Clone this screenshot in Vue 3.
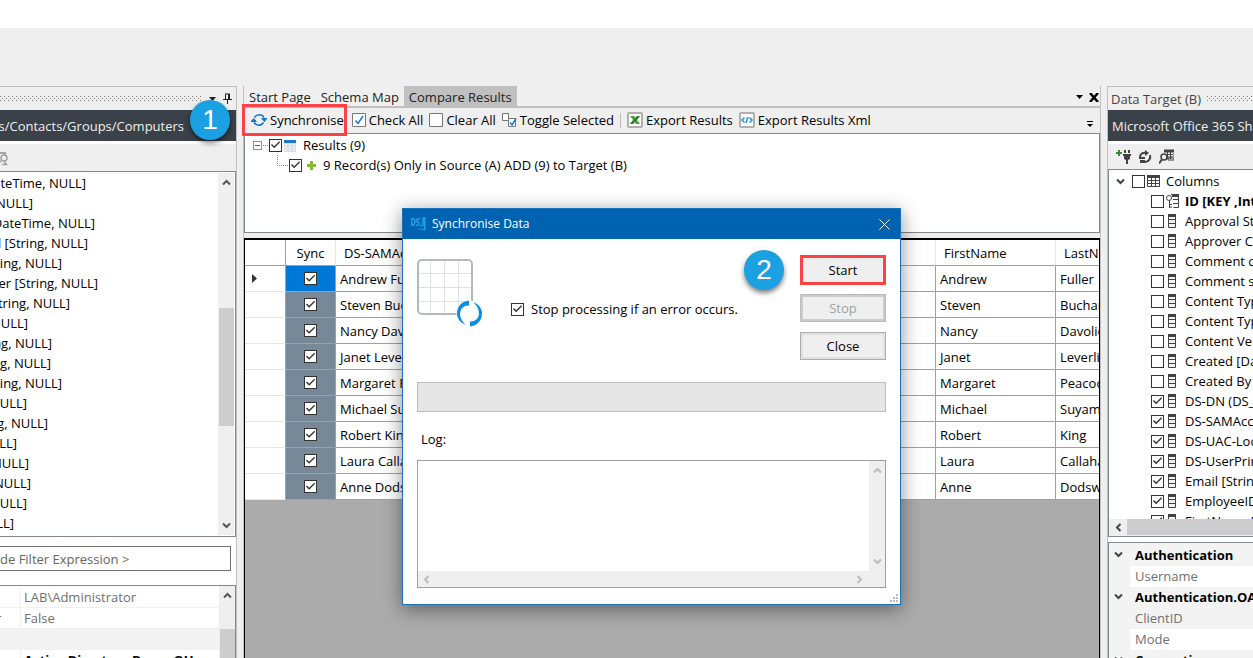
<script setup>
import { ref } from 'vue'

const sourceColumns = [
  { text: 'DateTime, NULL]', end: 86 },
  { text: 'NULL]', end: 33 },
  { text: '[DateTime, NULL]', end: 95 },
  { text: 'rd [String, NULL]', end: 88 },
  { text: 'String, NULL]', end: 62 },
  { text: 'ber [String, NULL]', end: 98 },
  { text: 'String, NULL]', end: 70 },
  { text: 'NULL]', end: 28 },
  { text: 'ring, NULL]', end: 52 },
  { text: 'ring, NULL]', end: 51 },
  { text: 'String, NULL]', end: 62 },
  { text: 'NULL]', end: 27 },
  { text: 'ing, NULL]', end: 48 },
  { text: 'NULL]', end: 17 },
  { text: 'NULL]', end: 29 },
  { text: 'NULL]', end: 31 },
  { text: 'NULL]', end: 27 },
  { text: 'NULL]', end: 14 }
]

const people = ref([
  ['Andrew', 'Fuller'],
  ['Steven', 'Buchanan'],
  ['Nancy', 'Davolio'],
  ['Janet', 'Leverling'],
  ['Margaret', 'Peacock'],
  ['Michael', 'Suyama'],
  ['Robert', 'King'],
  ['Laura', 'Callahan'],
  ['Anne', 'Dodsworth']
].map(([first, last]) => ({ first, last, sync: true })))

const targetColumns = ref([
  ['ID [KEY ,Integer]', false],
  ['Approval Status', false],
  ['Approver Comments', false],
  ['Comment count', false],
  ['Comment settings', false],
  ['Content Type', false],
  ['Content Type ID', false],
  ['Content Version', false],
  ['Created [DateTime]', false],
  ['Created By', false],
  ['DS-DN (DS_DN)', true],
  ['DS-SAMAccountName', true],
  ['DS-UAC-LockOut', true],
  ['DS-UserPrincipal', true],
  ['Email [String]', true],
  ['EmployeeID', true],
  ['FirstName [String]', true]
].map(([name, checked], i) => ({ name, checked, key: i === 0 })))

const targetProps = [
  { name: 'Authentication', group: true },
  { name: 'Username' },
  { name: 'Authentication.OAuth', group: true },
  { name: 'ClientID', shaded: true },
  { name: 'Mode' },
  { name: 'Connection', group: true }
]

const allColumns = ref(false)
const results = ref(true)
const additions = ref(true)
const stopOnError = ref(true)
const filter = ref('de Filter Expression >')
const log = ref('')
</script>

<template>
  <div class="app">
    <svg class="defs" aria-hidden="true">
      <defs>
        <pattern id="grip" width="4" height="4" patternUnits="userSpaceOnUse">
          <rect x="0" y="0" width="1" height="1" fill="#777" />
          <rect x="2" y="2" width="1" height="1" fill="#777" />
        </pattern>
        <symbol id="up" viewBox="0 0 9 7"><path d="M1 5.5 4.500 2 8 5.500" fill="none" stroke="currentColor" stroke-width="2" /></symbol>
        <symbol id="down" viewBox="0 0 9 7"><path d="M1 1.500 4.500 5 8 1.500" fill="none" stroke="currentColor" stroke-width="2" /></symbol>
        <symbol id="left" viewBox="0 0 7 9"><path d="M5.500 1 2 4.500 5.500 8" fill="none" stroke="currentColor" stroke-width="2" /></symbol>
        <symbol id="right" viewBox="0 0 7 9"><path d="M1.500 1 5 4.500 1.500 8" fill="none" stroke="currentColor" stroke-width="2" /></symbol>
      </defs>
    </svg>
    <div class="title-strip"></div>
    <div class="ribbon"></div>

    <div class="workspace">
      <section class="side source">
        <header class="caption">
          <svg class="grip"><rect width="100%" height="6" fill="url(#grip)" /></svg>
          <svg width="7" height="4" viewBox="0 0 7 4"><path d="M0 0h7L3.500 4z" fill="#222" /></svg>
          <svg width="9" height="11" viewBox="0 0 9 11"><path d="M2 1h5M2.500 1v5M6 1v5M0 6.500h9M4.500 7v4" fill="none" stroke="#222" /><path d="M5 1h2v5H5z" fill="#222" /></svg>
        </header>
        <div class="path"><span>Users/Contacts/Groups/Computers</span></div>
        <div class="tools">
          <svg class="grey-tool" width="16" height="16" viewBox="0 0 16 16" fill="none" stroke="#a3a3a3"><path d="M2 3h11v3" stroke-width="2" /><circle cx="12" cy="8" r="3" stroke-width="1.500" /><path d="m10 10-4 4M10 14.500h5M12 11l3 4" stroke-width="1.500" /></svg>
        </div>
        <div class="tree">
          <ul class="source-list">
            <li v-for="(c, i) in sourceColumns" :key="i" :style="{ width: c.end + 'px' }">{{ c.text }}</li>
          </ul>
          <div class="vbar">
            <svg width="9" height="7"><use href="#up" /></svg>
            <div class="track"><div class="thumb"></div></div>
            <svg width="9" height="7"><use href="#down" /></svg>
          </div>
        </div>
        <div class="filter"><input v-model="filter" type="text" aria-label="Filter expression"></div>
        <div class="props">
          <div class="prop-rows">
            <div class="prop"><span class="name"></span><span class="value">LAB\Administrator</span></div>
            <div class="prop"><span class="name">r</span><span class="value">False</span></div>
            <div class="prop group"></div>
            <div class="prop"><span class="name"></span><span class="value strong">Active Directory Demo OU</span></div>
          </div>
          <div class="vbar">
            <svg width="9" height="7"><use href="#up" /></svg>
            <div class="track low"><div class="thumb"></div></div>
          </div>
        </div>
      </section>

      <main class="centre">
        <nav class="tabs">
          <button type="button">Start Page</button>
          <button type="button">Schema Map</button>
          <button type="button" class="active">Compare Results</button>
          <span class="spacer"></span>
          <svg class="menu" width="7" height="4" viewBox="0 0 7 4"><path d="M0 0h7L3.500 4z" fill="#000" /></svg>
          <svg width="10" height="9" viewBox="0 0 10 9"><path d="m1 0 8 9M9 0 1 9" stroke="#000" stroke-width="2.500" /></svg>
        </nav>
        <div class="toolbar">
          <button type="button" class="sync">
            <svg width="16" height="16" viewBox="0 0 16 16"><path d="M3.500 5.500a5.500 5.500 0 0 1 9.500 0M12.500 10.500a5.500 5.500 0 0 1-9.500 0" fill="none" stroke="#1676cf" stroke-width="1.500" /><path d="M10.500 6H16v1l-2.500 3-3-3zM0 10V9l2.700-3L5.500 9v1z" fill="#1676cf" /></svg>Synchronise
          </button>
          <button type="button">
            <svg width="14" height="14" viewBox="0 0 14 14"><path d="M.5.500h13v13H.5z" fill="#fff" stroke="#777" /><path d="m3.500 7.500 2.500 3 5-7.500" fill="none" stroke="#1878d0" stroke-width="1.500" /></svg>Check All
          </button>
          <button type="button">
            <svg width="14" height="14" viewBox="0 0 14 14"><path d="M.5.500h13v13H.5z" fill="#fff" stroke="#777" /></svg>Clear All
          </button>
          <button type="button">
            <svg width="15" height="14" viewBox="0 0 15 14"><path d="M.5.500h6v7h-6z" fill="#fff" stroke="#777" /><path d="M6.500 5.500h7v8h-7z" fill="#fff" stroke="#777" /><path d="m8 9.500 2 2.500 4-6.500" fill="none" stroke="#1878d0" stroke-width="1.500" /></svg>Toggle Selected
          </button>
          <span class="divider"></span>
          <button type="button">
            <svg width="16" height="16" viewBox="0 0 16 16"><rect x="1" y="1" width="14" height="14" rx="1" fill="#fff" stroke="#b0b0b0" stroke-width="2" /><path d="M3 4h4l1.500 2L10 4h3l-3 4 3 4H9l-1.500-2L6 12H3l3-4z" fill="#4f9f41" /><path d="M10 4h3l-7 8H3z" fill="#2f7d32" /></svg>Export Results
          </button>
          <button type="button">
            <svg width="16" height="16" viewBox="0 0 16 16"><rect x="1" y="1" width="14" height="14" rx="1" fill="#fff" stroke="#b0b0b0" stroke-width="2" /><path d="M5.500 5.500 3 8l2.500 2.500M10.500 5.500 13 8l-2.500 2.500M9 5l-2 6" fill="none" stroke="#1a93e8" stroke-width="1.500" /></svg>Export Results Xml
          </button>
          <span class="spacer"></span>
          <svg class="overflow" width="6" height="7" viewBox="0 0 6 7"><path d="M0 0h6v1H0zM0 3h6L3 6z" fill="#000" /></svg>
        </div>

        <div class="results">
          <div class="node">
            <svg width="16" height="20" viewBox="0 0 16 20"><rect x=".5" y="6.500" width="8" height="8" fill="#fff" stroke="#919191" /><path d="M2 10.500h5" stroke="#3f5f9f" /><path d="M10 10.500h6" stroke="#888" stroke-dasharray="1 1" /></svg>
            <input id="results" v-model="results" type="checkbox">
            <svg class="node-icon" width="12" height="13" viewBox="0 0 12 13"><path d="M0 1h12v12H0z" fill="#d9dde0" /><path d="M0 1h12v3H0z" fill="#1878d0" /><path d="M1 6h2M5 6h2M9 6h2M1 8.500h2M5 8.500h2M9 8.500h2M1 11h2M5 11h2M9 11h2" stroke="#fff" /></svg>
            <label for="results">Results (9)</label>
          </div>
          <div class="node child">
            <svg width="12" height="20" viewBox="0 0 12 20"><path d="M.5 0v10.500H12" fill="none" stroke="#888" stroke-dasharray="1 1" /></svg>
            <input id="additions" v-model="additions" type="checkbox">
            <svg class="plus" width="9" height="9" viewBox="0 0 9 9"><path d="M3 0h3v3h3v3H6v3H3V6H0V3h3z" fill="#84bd2f" /></svg>
            <label for="additions">9 Record(s) Only in Source (A) ADD (9) to Target (B)</label>
          </div>
        </div>

        <div class="grid">
          <table>
            <colgroup><col class="c-row"><col class="c-sync"><col class="c-account"><col class="c-name"><col class="c-name"></colgroup>
            <thead>
              <tr><th></th><th class="mid">Sync</th><th>DS-SAMAccountName</th><th>FirstName</th><th>LastName</th></tr>
            </thead>
            <tbody>
              <tr v-for="(p, i) in people" :key="p.first">
                <td class="marker"><svg v-if="i === 0" width="5" height="9" viewBox="0 0 5 9"><path d="M0 0v9l5-4.500z" fill="#333" /></svg></td>
                <td class="check" :class="{ current: i === 0 }"><input v-model="p.sync" type="checkbox" :aria-label="'Sync ' + p.first"></td>
                <td>{{ p.first }} {{ p.last }}</td>
                <td>{{ p.first }}</td>
                <td>{{ p.last }}</td>
              </tr>
            </tbody>
          </table>
        </div>
      </main>

      <section class="side target">
        <header class="caption"><span>Data Target (B)</span><svg class="grip"><rect width="100%" height="6" fill="url(#grip)" /></svg></header>
        <div class="path"><span>Microsoft Office 365 SharePoint</span></div>
        <div class="tools">
          <svg width="15" height="16" viewBox="0 0 15 16"><path d="M0 4h6M3 1v6" stroke="#388a34" stroke-width="2" /><path d="M7 5h8v2h-1v3l-2 1v4h-2v-4l-2-1V7H7zM8 1h2v3H8zM12 1h2v3h-2z" fill="#424242" /></svg>
          <svg width="14" height="16" viewBox="0 0 14 16"><path d="M2 8c0-3 3-5 6-4M12 6c1 3-1 7-5 7" fill="none" stroke="#424242" stroke-width="2" /><path d="M7 1l4 3-4 3zM1 8h6v2H1zM2 11h5v3H2z" fill="#424242" /></svg>
          <svg width="15" height="16" viewBox="0 0 15 16"><path d="M5 1h10v10H9V9h5M5 3h9M8 5.500h6M9 8h5M8.500 2v8M11.500 2v8" fill="none" stroke="#424242" /><path d="M5 1h10v2H5z" fill="#424242" /><circle cx="5" cy="8" r="3" fill="#eee" stroke="#424242" stroke-width="1.500" /><path d="m3 10.500-3 4" stroke="#424242" stroke-width="2" /></svg>
        </div>
        <div class="tree">
          <div class="target-list">
            <div class="node root">
              <svg width="9" height="7"><use href="#down" /></svg>
              <input id="all-columns" v-model="allColumns" type="checkbox">
              <svg width="13" height="12" viewBox="0 0 13 12"><path d="M.5.500h12v11H.5zM0 5.500h13M0 8.500h13M4.500 2v10M8.500 2v10" fill="none" stroke="#424242" /><path d="M0 0h13v3H0z" fill="#424242" /></svg>
              <label for="all-columns">Columns</label>
            </div>
            <div v-for="(c, i) in targetColumns" :key="c.name" class="node leaf">
              <input :id="'col' + i" v-model="c.checked" type="checkbox">
              <svg v-if="c.key" width="13" height="14" viewBox="0 0 13 14"><circle cx="3" cy="4" r="2.500" fill="none" stroke="#424242" /><path d="M3.500 7v7M4 10.500h2M4 13h2M5 .500h7.500v13H7.500M7 5.500h5M7 9.500h5" fill="none" stroke="#424242" /><path d="M6 0h7v3H6z" fill="#424242" /></svg>
              <svg v-else class="column-icon" width="8" height="14" viewBox="0 0 8 14"><path d="M.5.500h7v13h-7zM1 5.500h6M1 9.500h6" fill="#f2f2f2" stroke="#424242" /><path d="M0 0h8v3H0z" fill="#424242" /></svg>
              <label :for="'col' + i" :class="{ strong: c.key }">{{ c.name }}</label>
            </div>
          </div>
          <div class="hbar"><svg width="7" height="9"><use href="#left" /></svg><div class="thumb"></div></div>
        </div>
        <div class="target-props">
          <div v-for="p in targetProps" :key="p.name" class="tprop" :class="{ group: p.group, shaded: p.shaded }">
            <span class="gutter"><svg v-if="p.group" width="9" height="7"><use href="#down" /></svg></span>
            <span class="tname">{{ p.name }}</span>
          </div>
        </div>
      </section>
    </div>

    <div class="badge one">1</div>

    <div class="dialog" role="dialog" aria-labelledby="dialog-title">
      <header class="dialog-title">
        <svg width="15" height="14" viewBox="0 0 15 14" fill="none" stroke="#1ba1e2"><path d="M.7 1v8M1 1.500c4 0 4 6 0 7M9 2c-4-1-4 2-2 3s1 4-2 3M12 1v6c0 2-2 2-3 1" stroke-width="1.500" /><path d="M12 0h2.500v13.500L4 11.500l9 .5z" fill="#1ba1e2" stroke="none" /></svg>
        <span id="dialog-title">Synchronise Data</span>
        <button type="button" aria-label="Close window"><svg width="11" height="11" viewBox="0 0 11 11"><path d="m.5.500 10 10M10.500.500l-10 10" stroke="#fff" /></svg></button>
      </header>
      <div class="dialog-body">
        <div class="upper">
          <svg class="big-icon" width="67" height="68" viewBox="0 0 67 68">
            <path d="M13.500 1v54M27.500 1v54M41.500 1v54M1 14.500h54M1 28.500h54M1 42.500h54" stroke="#dfe1e3" />
            <rect x="1" y="1" width="54" height="54" rx="4" fill="none" stroke="#b5b9bd" stroke-width="2" />
            <circle cx="52.500" cy="54.500" r="13" fill="#fff" />
            <path d="M52 41.500v5a8 8 0 0 0-9 8c0 5 3 9 6 11.500-6-2-9-7-9-11.500 0-7 5-12.500 12-13z" fill="#0a8fe6" />
            <path d="M53 67.500v-5a8 8 0 0 0 9-8c0-5-3-9-6-11.500 6 2 9 7 9 11.500 0 7-5 12.500-12 13z" fill="#0a8fe6" />
          </svg>
          <div class="option"><input id="stop-on-error" v-model="stopOnError" type="checkbox"><label for="stop-on-error">Stop processing if an error occurs.</label></div>
          <div class="actions">
            <button type="button" class="start">Start</button>
            <button type="button" disabled>Stop</button>
            <button type="button">Close</button>
          </div>
        </div>
        <div class="progress" role="progressbar" aria-label="Progress" aria-valuenow="0"></div>
        <label class="log-label" for="log">Log:</label>
        <div class="log">
          <textarea id="log" v-model="log"></textarea>
          <div class="log-v"><svg width="9" height="7"><use href="#up" /></svg><svg width="9" height="7"><use href="#down" /></svg></div>
          <div class="log-h"><svg width="7" height="9"><use href="#left" /></svg><svg width="7" height="9"><use href="#right" /></svg></div>
        </div>
      </div>
      <svg class="resize" width="8" height="8" viewBox="0 0 8 8"><path d="M6 0h2v2H6zM3 3h2v2H3zM6 3h2v2H6zM0 6h2v2H0zM3 6h2v2H3zM6 6h2v2H6z" fill="#bbb" /></svg>
      <div class="badge two">2</div>
    </div>
  </div>
</template>

<style>
body { margin: 0; }
</style>

<style scoped>
* { box-sizing: border-box; }
.app { position: relative; display: flex; flex-direction: column; height: 100vh; overflow: hidden; background: #efefef; color: #000; font: 13px/20px "Open Sans", "Noto Sans", sans-serif; white-space: nowrap; }
.defs { position: absolute; width: 0; height: 0; }
svg { display: block; flex: none; }
button, input, textarea { font: inherit; color: inherit; margin: 0; }
button { padding: 0; border: 0; background: none; }
input[type="checkbox"] { appearance: none; flex: none; display: grid; width: 13px; height: 13px; border: 1px solid #333; background: #fff; }
input[type="checkbox"]:checked::after { content: ""; background: #333; clip-path: polygon(9% 50%, 18% 41%, 38% 62%, 84% 16%, 92% 26%, 38% 80%); }
.title-strip { flex: none; height: 28px; background: #fff; }
.ribbon { flex: none; height: 58px; }
.workspace { flex: 1; min-height: 0; display: flex; }
.spacer { flex: 1; }
.strong { font-weight: 700; color: #000; }

.side { display: flex; flex-direction: column; min-width: 0; overflow: hidden; border-top: 1px solid #c0c0c0; background: #fff; }
.source { flex: 0 0 237px; border-right: 1px solid #c0c0c0; }
.target { flex: 0 0 146px; border-left: 1px solid #c0c0c0; }
.caption { flex: none; display: flex; align-items: center; height: 23px; background: #efefef; color: #444; }
.source .caption { gap: 7px; padding-right: 4px; }
.target .caption { gap: 6px; padding-left: 3px; }
.grip { flex: 1; min-width: 0; height: 6px; }
.path { flex: none; display: flex; height: 31px; align-items: center; overflow: hidden; background: #3a4149; color: #f0f0f0; }
.source .path { justify-content: flex-end; padding-right: 52px; }
.target .path { padding-left: 4px; }
.tools { flex: none; display: flex; align-items: center; gap: 7px; height: 27px; margin-top: 3px; padding-left: 8px; background: #efefef; }
.source .tools { padding-left: 0; }
.target .tools { height: 25px; }
.grey-tool { margin-left: -8px; }
.tree { flex: none; display: flex; min-height: 0; border: 1px solid #828790; }
.source .tree { height: 366px; border-left: 0; padding: 1px 1px 1px 0; }
.source-list { flex: 1; min-width: 0; overflow: hidden; margin: 0; padding: 0; list-style: none; }
.source-list li { display: flex; justify-content: flex-end; height: 20px; }
.vbar { flex: none; display: flex; flex-direction: column; align-items: center; width: 16px; padding: 6px 0; background: #efefef; color: #555; }
.track { flex: 1; width: 15px; padding-top: 122px; }
.thumb { height: 118px; background: #cdcdcd; }
.filter { flex: none; padding: 9px 5px 14px 0; }
.filter input { display: block; width: 100%; height: 25px; padding: 0; border: 1px solid #707070; border-left: 0; outline: 0; color: #666; }
.props { flex: 1; min-height: 0; display: flex; overflow: hidden; border: 1px solid #828790; border-width: 1px 1px 0 0; }
.prop-rows { flex: 1; padding-top: 1px; }
.prop { display: flex; height: 21px; border-bottom: 1px solid #f0f0f0; color: #707070; }
.name { width: 21px; overflow: hidden; border-right: 1px solid #f0f0f0; text-indent: -4px; }
.value { padding-left: 3px; }
.prop.group { background: #f3f3f3; }
.track.low { padding-top: 30px; }

.centre { flex: 1; min-width: 0; display: flex; flex-direction: column; margin: 0 6px; border: 1px solid #c0c0c0; border-width: 0 1px; }
.tabs { flex: none; display: flex; align-items: center; height: 22px; border-bottom: 2px solid #c0c0c0; color: #222; }
.tabs button { height: 20px; padding: 0 5px; line-height: 22px; }
.tabs button.active { background: #c0c0c0; }
.tabs svg { margin: 2px 1px 0 0; }
.tabs .menu { margin-right: 6px; }
.toolbar { flex: none; display: flex; align-items: center; height: 25px; padding-left: 4px; }
.toolbar button { display: flex; align-items: center; gap: 3px; height: 23px; margin-bottom: 2px; padding: 0 3px; }
.toolbar .sync { position: relative; margin-right: 2px; }
.sync::after { content: ""; position: absolute; inset: -4px 0 -5px -6px; border: 3px solid #fb4245; }
.divider { width: 1px; height: 15px; margin: 0 3px; background: #bdbdbd; }
.overflow { margin: 8px 7px 0 0; }
.results { flex: none; height: 100px; border: 1px solid #828790; background: #fff; padding: 1px 0 0 8px; }
.node { display: flex; align-items: center; height: 20px; }
.node-icon { margin: 0 7px 0 2px; }
.node.child { padding-left: 24px; }
.plus { margin: 0 7px 0 5px; }
.grid { flex: 1; min-height: 0; overflow: hidden; margin-top: 5px; border: 1px solid #000; border-width: 2px 1px 0; background: #ababab; }
table { table-layout: fixed; width: 931px; border-collapse: separate; border-spacing: 0; background: #fff; }
.c-row { width: 41px; }
.c-sync { width: 50px; }
.c-account { width: 600px; }
.c-name { width: 120px; }
th, td { height: 26px; padding: 0 4px; border: 1px solid #a0a0a0; border-width: 0 1px 1px 0; text-align: left; font-weight: 400; overflow: hidden; }
th { padding-left: 8px; border-right-color: #e5e5e5; }
th:first-child { border-right-color: #a0a0a0; }
th.mid { padding: 0; text-align: center; }
td.marker { padding-left: 7px; border-bottom-color: #e5e5e5; }
td.check { background: #778899; }
td.check.current { background: #0078d7; }
td.check input { margin: auto; }

.target .tree { flex-direction: column; height: 368px; border-right: 0; }
.target-list { flex: 1; min-height: 0; overflow: hidden; padding-top: 1px; }
.root { padding-left: 7px; color: #444; }
.root input { margin: 0 2px 0 7px; }
.root label { margin-left: 6px; color: #000; }
.leaf { padding-left: 42px; }
.leaf svg { margin: 0 6px 0 2px; }
.leaf .column-icon { margin: 0 9px 0 4px; }
.hbar { flex: none; display: flex; align-items: center; gap: 5px; height: 17px; padding: 0 0 1px 6px; background: #efefef; color: #444; }
.hbar .thumb { flex: 1; height: 16px; }
.target-props { flex: 1; min-height: 0; overflow: hidden; margin-top: 5px; padding-top: 2px; border: 1px solid #828790; border-width: 1px 0 0 1px; background: #f3f3f3; }
.tprop { display: flex; height: 21px; color: #707070; }
.gutter { flex: none; width: 21px; padding: 6px 0 0 5px; color: #444; background: #f3f3f3; }
.tname { flex: 1; padding-left: 5px; background: #fff; }
.group .tname { background: #f3f3f3; font-weight: 700; color: #000; }
.shaded .tname { background: #f3f3f3; }

.badge { position: absolute; width: 40px; height: 40px; border-radius: 50%; background: #1ba1e2; color: #fff; font: 28px/40px "Liberation Sans", Arial, sans-serif; text-align: center; box-shadow: 0 3px 5px rgba(0, 0, 0, .5); }
.one { left: 190px; top: 100px; }
.two { left: 341px; top: 41px; }

.dialog { position: absolute; left: 402px; top: 208px; width: 499px; border: 1px solid #1873bb; background: #fff; box-shadow: 0 4px 18px rgba(0, 0, 0, .45); }
.dialog-title { display: flex; align-items: center; height: 30px; padding: 0 10px 0 8px; background: #0063b1; color: #fff; font-size: 12px; }
.dialog-title span { flex: 1; padding-left: 6px; }
.dialog-body { display: flex; flex-direction: column; padding: 16px 14px; }
.upper { display: flex; min-height: 127px; }
.big-icon { margin-top: 4px; }
.option { flex: 1; display: flex; align-items: center; height: 20px; gap: 7px; margin: 44px 0 0 27px; }
.actions { display: flex; flex-direction: column; width: 86px; }
.actions button { height: 28px; margin-bottom: 10px; border: 1px solid #adadad; box-shadow: inset 0 0 0 2px #e1e1e1; background: #efefef; }
.actions button:disabled { border-color: #bcbcbc; box-shadow: inset 0 0 0 2px #ccc; color: #a0a0a0; }
.actions .start { height: 30px; margin-bottom: 9px; border: 3px solid #fb4245; box-shadow: none; }
.progress { height: 30px; border: 1px solid #bcbcbc; background: #e6e6e6; }
.log-label { margin: 17px 4px 11px; }
.log { display: grid; grid-template: 1fr 16px / 1fr 16px; height: 128px; border: 1px solid #a0a0a0; background: #efefef; color: #bbb; }
.log textarea { border: 0; padding: 0; resize: none; outline: 0; background: #fff; overflow: hidden; color: #000; }
.log-v { display: flex; flex-direction: column; justify-content: space-between; align-items: center; padding: 6px 0; }
.log-h { display: flex; justify-content: space-between; align-items: center; padding: 0 6px 0 5px; }
.resize { position: absolute; right: 2px; bottom: 2px; }
</style>
